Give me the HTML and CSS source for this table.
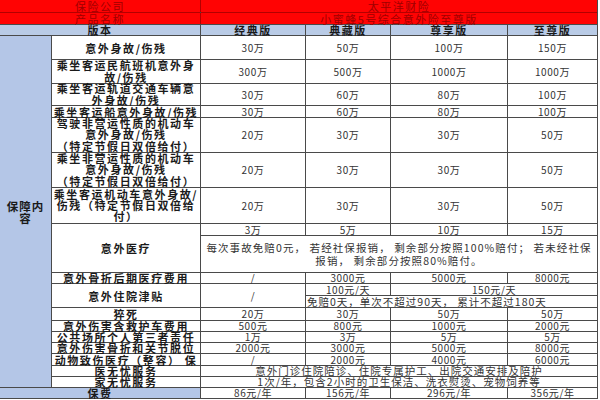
FILE: index.html
```html
<!DOCTYPE html>
<html lang="zh">
<head>
<meta charset="utf-8">
<title>保险对比</title>
<link rel="stylesheet" href="styles.css">
</head>
<body>
<div class="grid">
  <div class="cell red redl s2">保险公司</div>
  <div class="cell red redr s4">太平洋财险</div>
  <div class="cell red redl2 s2">产品名称</div>
  <div class="cell red s4">小蜜蜂5号综合意外险至尊版</div>

  <div class="cell head s2">版本</div>
  <div class="cell head">经典版</div>
  <div class="cell head">典藏版</div>
  <div class="cell head">尊享版</div>
  <div class="cell head">至尊版</div>

  <div class="cell side r19">保障内<br>容</div>
  <div class="cell item">意外身故/伤残</div>
  <div class="cell">30万</div><div class="cell">50万</div><div class="cell">100万</div><div class="cell">150万</div>

  <div class="cell item ml">乘坐客运民航班机意外身<br>故/伤残</div>
  <div class="cell">300万</div><div class="cell">500万</div><div class="cell">1000万</div><div class="cell">1000万</div>

  <div class="cell item ml">乘坐客运轨道交通车辆意<br>外身故/伤残</div>
  <div class="cell">30万</div><div class="cell">60万</div><div class="cell">80万</div><div class="cell">100万</div>

  <div class="cell item">乘坐客运船意外身故/伤残</div>
  <div class="cell">30万</div><div class="cell">60万</div><div class="cell">80万</div><div class="cell">100万</div>

  <div class="cell item ml">驾驶非营运性质的机动车<br>意外身故/伤残<br>（特定节假日双倍给付）</div>
  <div class="cell">20万</div><div class="cell">30万</div><div class="cell">30万</div><div class="cell">50万</div>

  <div class="cell item ml">乘坐非营运性质的机动车<br>意外身故/伤残<br>（特定节假日双倍给付）</div>
  <div class="cell">20万</div><div class="cell">30万</div><div class="cell">30万</div><div class="cell">50万</div>

  <div class="cell item ml">乘坐客运机动车意外身故/<br>伤残（特定节假日双倍给<br>付）</div>
  <div class="cell">20万</div><div class="cell">30万</div><div class="cell">30万</div><div class="cell">50万</div>

  <div class="cell item r2">意外医疗</div>
  <div class="cell">3万</div><div class="cell">5万</div><div class="cell">10万</div><div class="cell">15万</div>
  <div class="cell note s4">每次事故免赔0元， 若经社保报销， 剩余部分按照100%赔付； 若未经社保<br>报销， 剩余部分按照80%赔付。</div>

  <div class="cell item">意外骨折后期医疗费用</div>
  <div class="cell">/</div><div class="cell">3000元</div><div class="cell">5000元</div><div class="cell">8000元</div>

  <div class="cell item r2">意外住院津贴</div>
  <div class="cell r2">/</div>
  <div class="cell">100元/天</div>
  <div class="cell s2">150元/天</div>
  <div class="cell left s3">免赔0天，单次不超过90天， 累计不超过180天</div>

  <div class="cell item">猝死</div>
  <div class="cell">20万</div><div class="cell">30万</div><div class="cell">50万</div><div class="cell">50万</div>

  <div class="cell item">意外伤害含救护车费用</div>
  <div class="cell">500元</div><div class="cell">800元</div><div class="cell">1000元</div><div class="cell">2000元</div>

  <div class="cell item">公共场所个人第三者责任</div>
  <div class="cell">1万</div><div class="cell">3万</div><div class="cell">5万</div><div class="cell">5万</div>

  <div class="cell item">意外伤害骨折和关节脱位</div>
  <div class="cell">2000元</div><div class="cell">3000元</div><div class="cell">5000元</div><div class="cell">8000元</div>

  <div class="cell item">动物致伤医疗（整容） 保</div>
  <div class="cell">/</div><div class="cell">2000元</div><div class="cell">4000元</div><div class="cell">6000元</div>

  <div class="cell item">医无忧服务</div>
  <div class="cell wide s4">意外门诊住院陪诊、住院专属护工、出院交通安排及陪护</div>

  <div class="cell item">家无忧服务</div>
  <div class="cell wide s4">1次/年，包含2小时的卫生保洁、洗衣熨烫、宠物饲养等</div>

  <div class="cell fee s2">保费</div>
  <div class="cell">86元/年</div><div class="cell">156元/年</div><div class="cell">296元/年</div><div class="cell">356元/年</div>
</div>
</body>
</html>
```
FILE: styles.css
```css
html, body {
  margin: 0;
  padding: 0;
  background: #ffffff;
}
body {
  font-family: "Noto Sans CJK SC", "Noto Sans", sans-serif;
  color: #222;
}
.grid {
  display: grid;
  width: 597px;
  grid-template-columns: 51px 148px 104px 84px 116px 89px;
  grid-template-rows: 12px 11px 10px 23px 23px 21px 11px 34px 34px 35px 11px 36px 10px 11px 11px 12px 10px 10px 10px 11px 10px 10px 10px;
  gap: 1px;
  padding: 0 1px 1px 0;
  background: #4a4a4a;
}
.cell {
  background: #ffffff;
  display: flex;
  align-items: center;
  justify-content: center;
  text-align: center;
  font-size: 10px;
  line-height: 10px;
  letter-spacing: 0.6px;
  white-space: nowrap;
  color: #333;
}
.s2 { grid-column: span 2; }
.s3 { grid-column: span 3; }
.s4 { grid-column: span 4; }
.r2 { grid-row: span 2; }
.r19 { grid-row: span 19; }

.red {
  background: #ff0303;
  color: #a00000;
  font-size: 11px;
  line-height: 11px;
  letter-spacing: 1.5px;
  padding-top: 1px;
}
.redl {
  box-shadow: 1px 0 0 #b40000, 0 1px 0 #b40000;
}
.redr {
  box-shadow: 0 1px 0 #b40000;
}
.redl2 {
  box-shadow: 1px 0 0 #b40000;
}
.head {
  background: #b9cbe6;
  font-weight: bold;
  font-size: 11px;
  letter-spacing: 1.5px;
  color: #1a1a1a;
}
.side {
  background: #b4c6e7;
  font-weight: bold;
  font-size: 11.5px;
  letter-spacing: 1px;
  line-height: 12px;
  color: #1a1a1a;
}
.item {
  font-weight: bold;
  font-size: 11px;
  letter-spacing: 1.6px;
  color: #1a1a1a;
}
.ml {
  line-height: 11.2px;
}
.note {
  font-size: 10.5px;
  letter-spacing: 1.1px;
  line-height: 13px;
}
.left {
  justify-content: flex-start;
  text-align: left;
  font-size: 10.5px;
  letter-spacing: 1px;
  padding-left: 1px;
}
.wide {
  font-size: 10.5px;
  letter-spacing: 1px;
}
.fee {
  background: #b4c6e7;
  font-weight: bold;
  font-size: 11px;
  letter-spacing: 1.5px;
  color: #1a1a1a;
}
```
